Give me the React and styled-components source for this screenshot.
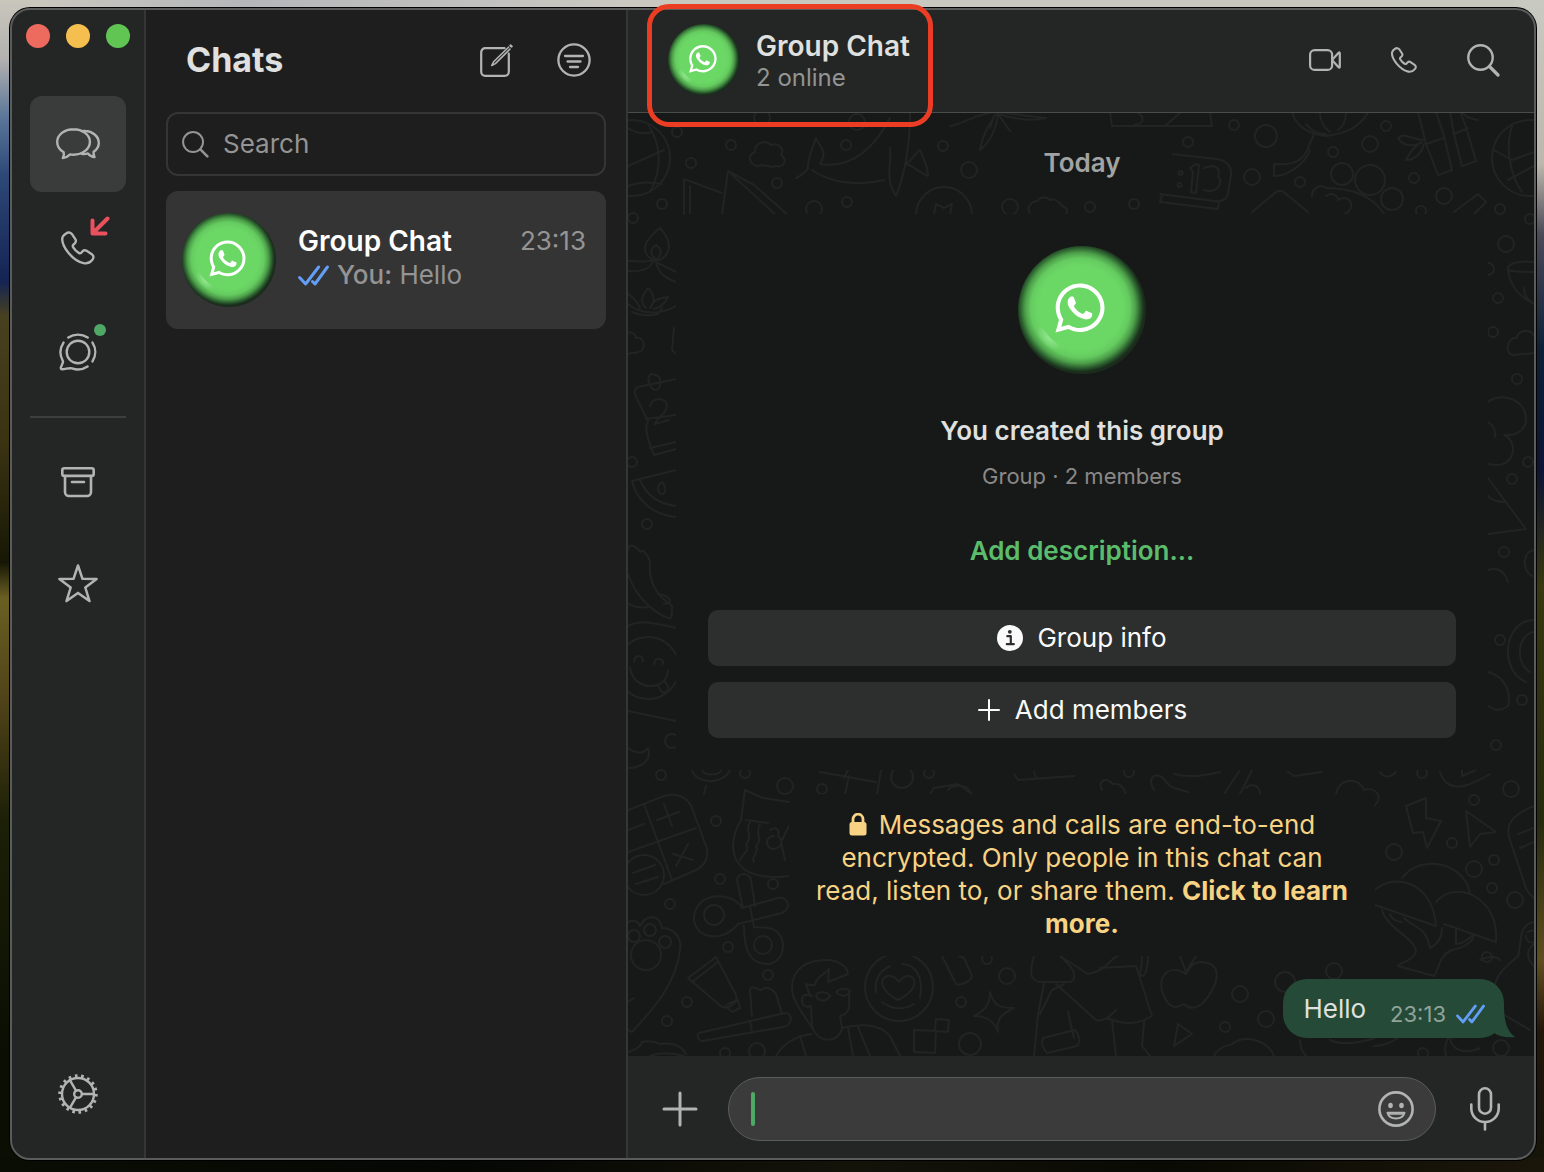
import React, { useId } from "react";
import styled, { createGlobalStyle, css } from "styled-components";
import { FaWhatsapp } from "react-icons/fa";

const color = {
  chrome: "#242625",
  list: "#1e1e1e",
  canvas: "#171918",
  doodle: "#222423",
  line: "#343635",
  edge: "#5a5c5b",
  icon: "#b2b4b3",
  text: "#dfe0df",
  muted: "#939493",
  green: "#5bbd6b",
  tick: "#629ef5",
  amber: "#f8d384",
};

const GlobalStyle = createGlobalStyle`
  *, *::before, *::after { box-sizing: border-box; }
  body {
    margin: 0;
    font-family: Inter, "Liberation Sans", sans-serif;
    font-size: 26px;
    line-height: 32px;
    color: ${color.text};
    background: #0b0d05;
  }
  button, input { font: inherit; color: inherit; }
  h1, h2, h3, p { margin: 0; }
`;

/* ---------- window frame ---------- */

const Desktop = styled.div`
  display: flex;
  min-height: 100vh;
  padding: 8px 8px 12px 10px;
  background:
    linear-gradient(90deg, #0a0d04, #050703 30%, #14130a 55%, #090a04 75%, #1b160a) bottom / 100% 14px no-repeat,
    linear-gradient(180deg, #c9c6bc 0, #b3b2b0 5%, #5b7699 10%, #2d4877 15%, #142453 24%, #48411f 27%, #3a3312 38%, #161705 48%, #6a5f22 51%, #4f4219 60%, #1c2007 70%, #0a0e03 90%) left / 30px 100% no-repeat,
    linear-gradient(180deg, #c8cac2 0, #bdb7ab 14%, #4a4a58 20%, #0d1f35 30%, #0c1433 40%, #38370f 50%, #262b0e 70%, #5f4d20 82%, #23160a 88%, #14150a 100%) right / 30px 100% no-repeat,
    linear-gradient(90deg, #cdc9bf, #b4b7ba 16%, #c9c7c0 40%, #c6c7bf) top / 100% 30px no-repeat;
`;

const Window = styled.div`
  display: flex;
  flex: 1;
  min-width: 0;
  border: 2px solid ${color.edge};
  border-radius: 20px;
  background: ${color.chrome};
  box-shadow: 0 0 0 1px #000;
`;

const Sidebar = styled.aside`
  display: flex;
  flex-direction: column;
  align-items: center;
  flex: 0 0 134px;
  padding: 14px 0 16px;
  border-right: 2px solid ${color.line};
`;

const Lights = styled.div`
  display: flex;
  gap: 16px;
  margin-bottom: 48px;
`;

const Light = styled.button`
  width: 24px;
  height: 24px;
  padding: 0;
  border: 0;
  border-radius: 50%;
  background: ${(p) => p.$tone};
`;

const Nav = styled.nav`
  display: flex;
  flex-direction: column;
  flex: 1;
  gap: 8px;
`;

const NavButton = styled.button`
  position: relative;
  display: grid;
  place-items: center;
  width: 96px;
  height: 96px;
  padding: 0;
  border: 0;
  border-radius: 12px;
  color: ${color.icon};
  background: ${(p) => (p.$active ? "#3a3c3b" : "transparent")};
`;

const NavRule = styled.hr`
  width: 96px;
  height: 2px;
  margin: 8px 0;
  border: 0;
  background: #3d3f3e;
`;

const NavSpacer = styled.div`
  flex: 1;
`;

const Badge = styled.span`
  position: absolute;
  display: block;
  line-height: 0;
  ${(p) =>
    p.$dot
      ? css`
          top: 20px;
          right: 20px;
          width: 12px;
          height: 12px;
          border-radius: 50%;
          background: #4fa866;
        `
      : css`
          top: 16px;
          right: 16px;
          color: #e9515f;
        `}
`;

/* ---------- shared parts ---------- */

const IconButton = styled.button`
  display: grid;
  place-items: center;
  padding: 0;
  border: 0;
  background: none;
  color: ${color.icon};
`;

const AvatarBox = styled.span`
  display: block;
  flex: none;
  width: ${(p) => p.$size}px;
  height: ${(p) => p.$size}px;
  svg { display: block; }
`;

/* ---------- chat list ---------- */

const ListColumn = styled.section`
  display: flex;
  flex-direction: column;
  flex: 0 0 482px;
  min-width: 0;
  padding: 0 20px;
  border-right: 2px solid ${color.line};
  background: ${color.list};
`;

const ListHeader = styled.header`
  display: flex;
  align-items: center;
  justify-content: space-between;
  height: 100px;
  margin-bottom: 2px;
  padding: 0 15px 0 20px;
`;

const ListTitle = styled.h1`
  font-size: 34px;
  line-height: 40px;
  font-weight: 700;
`;

const ListActions = styled.div`
  display: flex;
  gap: 44px;
`;

const SearchField = styled.label`
  display: flex;
  align-items: center;
  gap: 14px;
  height: 64px;
  padding: 0 14px;
  border: 2px solid #353535;
  border-radius: 12px;
  color: ${color.muted};
`;

const SearchInput = styled.input`
  flex: 1;
  min-width: 0;
  padding: 0;
  border: 0;
  outline: 0;
  background: none;
  color: ${color.text};
  &::placeholder { color: ${color.muted}; opacity: 1; }
`;

const ChatCard = styled.button`
  display: flex;
  align-items: flex-start;
  gap: 22px;
  margin-top: 15px;
  padding: 22px 20px 22px 16px;
  border: 0;
  border-radius: 12px;
  background: #343434;
  text-align: left;
`;

const ChatText = styled.span`
  display: flex;
  flex-direction: column;
  flex: 1;
  gap: 2px;
  padding-top: 12px;
`;

const ChatLine = styled.span`
  display: flex;
  align-items: center;
  gap: 8px;
  color: #949494;
`;

const ChatName = styled.span`
  flex: 1;
  font-size: 28px;
  font-weight: 600;
  color: #fff;
`;

const Sender = styled.span`
  font-weight: 500;
`;

/* ---------- conversation ---------- */

const Main = styled.main`
  display: flex;
  flex-direction: column;
  flex: 1;
  min-width: 0;
`;

const MainHeader = styled.header`
  display: flex;
  align-items: center;
  justify-content: space-between;
  padding: 14px 34px 16px 40px;
  border-bottom: 1px solid #4a4c4b;
`;

const Contact = styled.button`
  position: relative;
  display: flex;
  align-items: center;
  gap: 16px;
  padding: 0;
  border: 0;
  background: none;
  text-align: left;
`;

const Highlight = styled.span`
  position: absolute;
  z-index: 2;
  inset: -20px -23px -31px -21px;
  border: 5px solid #eb3d24;
  border-radius: 22px;
  pointer-events: none;
`;

const ContactText = styled.span`
  display: flex;
  flex-direction: column;
  padding-top: 4px;
`;

const ContactName = styled.span`
  font-size: 28px;
  font-weight: 600;
`;

const ContactStatus = styled.span`
  font-size: 24px;
  color: ${color.muted};
`;

const HeaderActions = styled.div`
  display: flex;
  align-items: center;
  gap: 50px;
`;

const Canvas = styled.div`
  position: relative;
  display: flex;
  flex-direction: column;
  align-items: center;
  flex: 1;
  padding: 19px 30px 18px 32px;
  background: ${color.canvas};
`;

const Wallpaper = styled.svg`
  position: absolute;
  inset: 0;
  width: 100%;
  height: 100%;
`;

const Plate = styled.div`
  position: relative;
  border-radius: 16px;
  background: ${color.canvas};
  text-align: center;
`;

const DayPlate = styled(Plate)`
  width: 180px;
  padding: 15px 0 13px;
  font-weight: 600;
  color: #a2a4a3;
`;

const GroupPlate = styled(Plate)`
  display: flex;
  flex-direction: column;
  align-items: center;
  align-self: stretch;
  margin: 22px 16px 0;
  padding: 32px;
`;

const GroupTitle = styled.h2`
  margin-top: 41px;
  font-size: 26px;
  font-weight: 600;
`;

const GroupMeta = styled.p`
  margin-top: 15px;
  font-size: 22px;
  line-height: 28px;
  color: #8b8888;
`;

const DescriptionLink = styled.a`
  margin: 45px 0 43px;
  font-weight: 600;
  color: ${color.green};
  text-decoration: none;
`;

const GroupActions = styled.div`
  display: flex;
  flex-direction: column;
  align-self: stretch;
  gap: 16px;
`;

const GroupAction = styled.button`
  display: flex;
  align-items: center;
  justify-content: center;
  gap: 14px;
  height: 56px;
  padding: 0;
  border: 0;
  border-radius: 10px;
  background: #2d2f2e;
  color: #fafafa;
`;

const NoticePlate = styled(Plate)`
  width: 586px;
  margin-top: 24px;
  padding: 14px 20px 16px;
  line-height: 33px;
  color: ${color.amber};
  svg { margin-right: 12px; vertical-align: -2px; }
  a { font-weight: 700; color: inherit; text-decoration: none; }
`;

const Bubble = styled.div`
  position: relative;
  display: flex;
  align-items: center;
  align-self: flex-end;
  height: 59px;
  margin-top: auto;
  padding: 0 19px 0 20px;
  border-radius: 24px;
  background: #264a38;
`;

const BubbleTail = styled.svg`
  position: absolute;
  right: -11px;
  bottom: 0;
`;

const BubbleMeta = styled.span`
  display: flex;
  align-items: center;
  gap: 10px;
  padding: 10px 0 0 24px;
  font-size: 22px;
  line-height: 28px;
  color: #8fa398;
`;

const Composer = styled.form`
  display: flex;
  align-items: center;
  padding: 21px 34px 17px;
`;

const MessageField = styled.div`
  display: flex;
  align-items: center;
  flex: 1;
  height: 64px;
  margin: 0 34px 0 30px;
  padding: 0 21px 0 22px;
  border: 1px solid #5b5d5c;
  border-radius: 32px;
  background: #3a3b3a;
`;

const Caret = styled.span`
  width: 4px;
  height: 34px;
  border-radius: 2px;
  background: #4fa866;
`;

const MessageInput = styled.input`
  flex: 1;
  min-width: 0;
  padding: 0 8px;
  border: 0;
  outline: 0;
  background: none;
`;

/* ---------- icons ---------- */

const Icon = ({ w, h, sw = 2.4, children }) => (
  <svg
    width={w}
    height={h}
    viewBox={`0 0 ${w} ${h}`}
    fill="none"
    stroke="currentColor"
    strokeWidth={sw}
    strokeLinecap="round"
    strokeLinejoin="round"
    aria-hidden="true"
  >
    {children}
  </svg>
);

const ChatsIcon = () => (
  <Icon w={44} h={32} sw={2.4}>
    <path d="M17.5 1.2C8.4 1.2 1.2 6.8 1.2 14c0 4.2 2.5 8 6.5 10.3.7 2-.2 4.2-.9 5.8 2.9-.3 5.6-1.9 7.4-3.7 1.1.2 2.2.3 3.3.3 9.1 0 16.4-5.8 16.4-12.8S26.6 1.2 17.5 1.2z" />
    <path d="M26 3.1c1-.2 2-.3 3-.2 7.4.3 13.8 5.2 13.8 12 0 3.6-1.8 6.5-5.2 8.8-.2 2 .2 4 .9 5.4-2.9-.3-5-1.8-6.6-3.7-1.9.6-4 .8-6.2.4" />
  </Icon>
);

const PhoneShape = () => (
  <path d="M5 2.6C7 .9 9.5 1.2 11 3.2l3.3 5c1 1.6.7 3-.5 4.2l-1.4 1.3c-.8.8-.8 1.6-.2 2.6 1.3 2.1 3.4 4.3 5.6 5.6 1 .6 1.8.5 2.6-.3l1.2-1.4c1.2-1.2 2.6-1.3 4-.4l5.2 3.5c2 1.4 2.2 3.7.4 5.7-2.2 2.6-4.9 4-8.6 3.2C17 31 11.5 26.8 7.4 21.8 3.6 17 1.2 12 1.2 8.2c0-2.2 1.5-4.1 3.8-5.6z" />
);

const CallsIcon = () => (
  <Icon w={34} h={34} sw={2.4}>
    <PhoneShape />
  </Icon>
);

const CallIcon = () => (
  <svg width="26" height="26" viewBox="0 0 34 34" fill="none" stroke="currentColor" strokeWidth="2.7" strokeLinejoin="round" aria-hidden="true">
    <PhoneShape />
  </svg>
);

const MissedIcon = () => (
  <Icon w={20} h={20} sw={4}>
    <path d="M17.5 2.5L3 17M2.5 4.5v13h13" />
  </Icon>
);

const StatusIcon = () => (
  <Icon w={40} h={40} sw={2.4}>
    <circle cx="20" cy="20" r="11.3" />
    <path d="M10.3 5.6a17.5 17.5 0 0 1 19.4 0M34.5 10.6a17.5 17.5 0 0 1 0 18.8M29.6 34.5A17.5 17.5 0 0 1 14 36.4c-2.5-.8-6 .6-9.8.8-1.2 0-1.6-.6-1.3-1.8l2-4.9c.3-1 0-1.6-.3-2.1A17.5 17.5 0 0 1 5.5 10.6" />
  </Icon>
);

const ArchiveIcon = () => (
  <Icon w={34} h={31} sw={2.6}>
    <rect x="1.3" y="1.3" width="31.4" height="7.6" rx="2" />
    <path d="M4 9v16a4 4 0 0 0 4 4h18a4 4 0 0 0 4-4V9M11 15h12" />
  </Icon>
);

const StarIcon = () => (
  <Icon w={40} h={44} sw={2.5}>
    <path d="M20 1.5l4.5 13.3 14.1.2-11.3 8.5 4.2 13.6L20 28.9 8.5 37.1l4.2-13.6L1.4 15l14.1-.2z" />
  </Icon>
);

const GearIcon = () => (
  <Icon w={40} h={40} sw={2.4}>
    <circle cx="20" cy="20" r="16" />
    <circle cx="20" cy="20" r="18.2" strokeWidth="3" strokeLinecap="butt" pathLength="100" strokeDasharray="2.3 3.256" />
    <circle cx="20" cy="20" r="3.8" />
    <path d="M24 20h12M18 16.6L11.9 6.2M18 23.4l-6.1 10.4" />
  </Icon>
);

const ComposeIcon = () => (
  <Icon w={33} h={33} sw={2.2}>
    <path d="M24.5 4.2H5.2a4 4 0 0 0-4 4v19.6a4 4 0 0 0 4 4h19.6a4 4 0 0 0 4-4V9.5" />
    <path d="M28.5 3.2L13.6 17.8l-1.9 3.7 3.7-1.9L30 5" strokeWidth="1.6" />
    <path d="M30.6 1.6l.8.8" strokeWidth="2.6" />
  </Icon>
);

const FilterIcon = () => (
  <Icon w={34} h={34} sw={2.3}>
    <circle cx="17" cy="17" r="15.6" />
    <path d="M8 13h18M10.5 18.5h13M13 24h8" />
  </Icon>
);

const SearchIcon = ({ size }) => (
  <svg width={size} height={size} viewBox="0 0 33 33" fill="none" stroke="currentColor" strokeLinecap="round" aria-hidden="true">
    <circle cx="13.5" cy="13.5" r="12.2" strokeWidth="2.4" />
    <path d="M22.5 22.5l8.5 8.5" strokeWidth="3.2" />
  </svg>
);

const VideoIcon = () => (
  <Icon w={32} h={22} sw={2.2}>
    <rect x="1.1" y="1.1" width="22" height="19.8" rx="4.5" />
    <path d="M23 11l6.6-7.2c.7-.7 1.2-.4 1.2.4v13.6c0 .8-.5 1.1-1.2.4z" />
  </Icon>
);

const Ticks = ({ w, h }) => (
  <svg width={w} height={h} viewBox="0 0 31 21" fill="none" stroke={color.tick} strokeWidth="3" strokeLinecap="round" strokeLinejoin="round" role="img" aria-label="Read">
    <path d="M1.6 12.5l6 6.5L20.6 2M14.5 16.5L17 19 29.4 2" />
  </svg>
);

const InfoIcon = () => (
  <svg width="26" height="26" viewBox="0 0 26 26" aria-hidden="true">
    <circle cx="13" cy="13" r="13" fill="#fafafa" />
    <circle cx="12.8" cy="6.8" r="1.9" fill="#2d2f2e" />
    <path d="M10.3 11.2h3.5v7.6M9.8 19.2h7" fill="none" stroke="#2d2f2e" strokeWidth="2.2" strokeLinecap="round" strokeLinejoin="round" />
  </svg>
);

const PlusIcon = ({ size, sw }) => (
  <Icon w={size} h={size} sw={sw}>
    <path d={`M${size / 2} 2v${size - 4}M2 ${size / 2}h${size - 4}`} />
  </Icon>
);

const LockIcon = () => (
  <svg width="18" height="23" viewBox="0 0 18 23" aria-hidden="true">
    <rect x="0.5" y="9" width="17" height="13.5" rx="2.5" fill={color.amber} />
    <path d="M4 11V6.2a5 5 0 0 1 10 0V11" fill="none" stroke={color.amber} strokeWidth="2.8" />
  </svg>
);

const EmojiIcon = () => (
  <Icon w={36} h={36} sw={2.6}>
    <circle cx="18" cy="18" r="16.6" />
    <ellipse cx="12.5" cy="14.5" rx="2.3" ry="2.8" fill="currentColor" stroke="none" />
    <ellipse cx="23.5" cy="14.5" rx="2.3" ry="2.8" fill="currentColor" stroke="none" />
    <path d="M9.500 21.800h17c-1 3.600-4.300 5.700-8.500 5.700s-7.500-2.100-8.500-5.700z" strokeWidth="2" />
    <path d="M11 23h14" strokeWidth="1.6" />
  </Icon>
);

const MicIcon = () => (
  <Icon w={30} h={44} sw={2.6}>
    <rect x="9" y="1.3" width="12" height="25.4" rx="6" />
    <path d="M1.3 17.5v4A13.5 13.5 0 0 0 15 35a13.5 13.5 0 0 0 13.7-13.5v-4M15 35v7.5" />
  </Icon>
);

const Avatar = ({ size }) => {
  const id = useId();
  return (
    <AvatarBox $size={size}>
      <svg width={size} height={size} viewBox="0 0 128 128" role="img" aria-label="Group picture">
        <defs>
          <radialGradient id={`${id}g`} cx="0.487" cy="0.484" r="0.502">
            <stop offset="0.66" stopColor="#6bd765" />
            <stop offset="0.77" stopColor="#65cc60" />
            <stop offset="0.86" stopColor="#4d9f4a" />
            <stop offset="0.93" stopColor="#2d6230" />
            <stop offset="0.98" stopColor="#1c371e" />
            <stop offset="1" stopColor="#1b2c1c" />
          </radialGradient>
          <radialGradient id={`${id}h`}>
            <stop offset="0" stopColor="#93e58f" />
            <stop offset="1" stopColor="#93e58f" stopOpacity="0" />
          </radialGradient>
        </defs>
        <circle cx="64" cy="64" r="64" fill={`url(#${id}g)`} />
        <ellipse cx="31" cy="92" rx="16" ry="8" transform="rotate(45 31 92)" fill={`url(#${id}h)`} />
        <circle cx="62" cy="62" r="42" fill="#6bd765" />
        <FaWhatsapp x="34" y="34" size={56} color="#fff" />
      </svg>
    </AvatarBox>
  );
};

/* ---------- wallpaper ---------- */

const DOTS = [
  [677, 132], [731, 145], [691, 163], [846, 145], [943, 146], [777, 183], [662, 204], [847, 202], [633, 218],
  [1234, 125], [1188, 142], [1300, 182], [1333, 152], [1386, 126], [1414, 178], [1421, 211], [1500, 209],
  [1530, 219], [1090, 207], [1134, 204], [1498, 298], [1493, 332], [1517, 379], [1512, 479], [1528, 462],
  [1504, 552], [647, 524], [632, 462], [661, 775], [745, 773], [822, 789], [929, 773], [716, 821], [720, 879],
  [773, 884], [670, 904], [728, 947], [768, 975], [687, 1002], [667, 1021], [725, 1053], [987, 959], [961, 1002],
  [1422, 773], [1474, 800], [1452, 843], [1494, 860], [1492, 888], [1487, 957], [1225, 1027], [1423, 1053],
  [1129, 772], [1500, 640], [1522, 700], [1496, 745],
];

const RINGS = [
  [762, 118, 8], [857, 122, 8], [814, 209, 8], [969, 170, 8], [1266, 136, 11], [1252, 177, 8], [1370, 144, 8],
  [1342, 174, 11], [1370, 180, 15], [1392, 199, 11], [1444, 196, 8], [1010, 207, 8], [1506, 244, 8], [1488, 269, 6],
  [648, 668, 31], [672, 741, 7], [785, 786, 8], [902, 777, 11], [757, 1051, 8], [1007, 976, 8], [970, 1044, 11],
  [1511, 789, 8], [1394, 852, 8], [1474, 869, 8], [1515, 900, 8], [1334, 971, 8], [1240, 994, 8], [1285, 982, 10],
  [1266, 1019, 8], [1501, 1048, 8], [899, 987, 34], [714, 915, 10], [763, 945, 9], [646, 955, 15], [650, 930, 6],
  [665, 942, 6], [634, 936, 6], [632, 158, 38], [1530, 158, 38], [944, 215, 28], [644, 875, 20],
];

const SHAPES = [
  // beach balls
  "M628 128q12 8 24 4M628 186q14-6 34-2M648 124c14 22 14 46 2 68M628 166l36-16M1512 126c-6 18-4 46 10 66M1494 150l18 10 22-8M1508 180l26-14",
  // cloud
  "M757 166c-8-2-10-11-2-14-1-9 11-13 16-7 8-3 14 5 10 10 7 5 3 13-6 11-5 3-9-3-18 0z",
  // whale
  "M796 178c6-2 8-6 12-9-1-9 4-20 8-31 4 10 12 12 4 26 26 4 50-8 70-46M812 170c20 14 50 16 72 10M890 148c2 18-6 30 6 48 8-20 14-50 14-84M906 164c8-6 12-14 14-14 4 10 8 16 8 26-10-4-14-10-22-12",
  // playing cards
  "M684 214v-35l38 14M690 214v-28M722 214l6-43 26 14 34 30M728 171l48 44",
  // palm leaves
  "M950 126c14-2 24-12 46-14 18 2 32 4 50 6-18 4-34 0-48-4 8 12 14 18 18 28M980 150c2-14 8-24 16-36M980 150c10-8 16-20 18-36M990 128l4-12",
  // framed landscape
  "M1110 112l2 14h100l-2-14M1134 125c12-2 10-8 4-12M1166 125l14-12",
  // sparkler and lantern
  "M1292 112c4 14 16 22 34 24 18-2 34-8 42-24M1306 124c6 8 14 10 20 10M1320 112c0 8 2 14 10 20M1346 112c0 8-2 14-8 18M1314 134l-6 14c-4 12-14 18-34 16v12c16 0 32-14 36-26",
  // digital clock
  "M1172 154l44 5c10 1 16 7 15 16l-3 18c-1 7-8 9-14 8l-54-7M1162 195l-2 7 58 7 1-7",
  "M1190 168l6-4 3 1-3 28-5-1 2-20zM1204 168c10-4 18 0 14 8 6 6 0 18-14 14M1180 171a2 2 0 1 0 1 0M1179 183a2 2 0 1 0 1 0",
  // bamboo
  "M1418 112l8 32 12 31 14-5-8-34-8-24M1426 144l18-6M1450 112l4 22 8 32 14-5-10-34-6-16M1454 134l14-6M1424 140c-12 0-18-8-26-2 6 10 18 8 24 4-8 4-12 10-16 18 10 0 16-8 18-16M1462 112c4 6 8 6 16 8",
  // arrow, heart and hand
  "M1252 212l24-20c4-2 6-2 10 2l22 18M1312 196c0-8 8-12 14-8 20 0 44 4 58 26M1326 196c8-6 14 4 12 4 10-6 18 4 10 12l-14 8M1454 212l24-18 8 8-12 12",
  // bush
  "M1030 213c-4-6 2-12 8-12 2-5 10-4 12-1 8-2 10 4 12 6 6 2 6 6 4 8M934 214l2-10 8 4 8-4-2 10",
  // oil lamp
  "M660 228c-10 8-15 14-15 20 0 8 6 12 12 12s12-6 12-14c0-7-4-12-9-18zM655 258c-6-4-4-10 1-13 6 4 6 10 1 14M628 261c10 0 16 2 26-1-4 10-14 12-26 11M656 260c0 10 8 18 20 22M676 272l-20-10M628 304c14 12 34 10 48 2M632 312c8 4 20 4 26 2l4-6M646 308c-8-8-2-14 2-20 8 8 6 16 2 20M650 308c4-10 12-10 18-11-4 8-8 10-14 12M640 308c-4-8-8-12-12-14",
  // small cloud and cup
  "M628 332c6 0 8 4 8 6 10-2 10 14 2 14-4 2-6 0-10 2M674 328l-2 22 4 4",
  // calendar page
  "M676 379l-38 8c-4 2-4 6-2 10l12 24M648 421c-4 8 0 16 2 24l4 10 22-6M646 419l30-4M651 374c-6 4 0 16 5 16s6-14 0-15zM650 406c2-10 18-8 17 0-1 8-10 12-12 18l14-4M650 448l26-6",
  // watermelon
  "M676 470l-44 11c4 18 20 34 44 36M640 480c6 14 18 24 36 26M662 482c-6 4-4 12 0 12s4-8 0-12",
  // pepper
  "M628 550c0-8 8-4 12 2 4-4 8 4 10 10-2 22 8 34 22 44 0 8 0 14-4 12-20-8-34-26-40-44M628 604c8 4 14 4 20 3M658 594c6 0 12 4 12 8l-6 2M628 626c8-6 24-4 48 2",
  // tongue face
  "M634 662c1-8 9-8 9 0M654 664c1-7 9-7 9 0M630 668c2 14 16 22 30 16 6-4 8-8 8-14M658 686l4 6c4 2 8-2 6-6l-4-6M628 711l48 10",
  // moon
  "M628 748c8 6 16 6 20 0 4 12-6 20-20 20M692 770c4 14 30 16 38 0M702 770c2 6 16 6 20 0M706 786l-2 8M844 778l4-8M820 772l56 10M877 794l4-24M845 794l4-18M930 794l4-6 24-4 14 10",
  // coffee bowl
  "M1534 262c-16-2-28 2-26 8 6 2 16 2 26 2M1508 270c2 18 14 28 26 34M1524 288c0 8 4 12 10 16",
  // cloud and flower on the right strip
  "M1534 336c-4-8-16-6-17 2-10-2-14 18-2 17 8-2 10 0 19-2M1488 402c12-10 38-4 38 18 0 10-10 16-22 15 14 6 12 30-8 30l-8-1M1488 422c6 4 8 10 7 15",
  // set square
  "M1488 478l38 51-38 5M1488 496c4 4 8 6 16 6",
  // lower right strip
  "M1488 570c14-4 18 6 20 12M1534 550c-12 2-12 20-2 26M1534 620c-30 0-36 50-8 62M1534 632c-16 2-20 30-4 40M1488 672c16 4 24 20 20 34-8 6-14 4-20 0",
  // calculator
  "M628 810l36-14c14-4 24 2 28 12l14 38c4 12-2 20-10 24l-32 14M644 804l28 76M628 852l68-24M657 820l22-8M664 804l8 22M673 854l20 6M688 844l-12 22M628 830l16-6M633 873l22-8M636 884l22-7",
  // cat
  "M789 802l-26-4-18-8-4 30c-12 20-10 40 4 50 14 8 30 8 44 6M746 820l22 3M750 822c-6 10 4 14-4 22 4 8-4 10-6 16M760 824c-6 10 4 14-4 22 4 8-6 10-2 16M789 826l-8 16 4 18M770 830c6-4 10 0 8 6 8 6 0 16-8 12-6-6-2-12 4-12",
  // crossed spoons
  "M742 908l36-10c10-2 14 10 4 15l-44 11M742 908c-8-16-44-18-48 8-2 20 26 30 44 8M737 880c0-8 12-8 14 0l4 26M744 926c0 28 8 38 24 38 20-2 20-34 0-36l-14-1-4-20M737 880l6 28",
  // paw and heart
  "M628 922c4-2 10-2 12 4 6-12 20-12 22 2 12 0 20 10 18 22-4 34-26 58-48 82l-4-2",
  // paint tube
  "M688 978l28-21 20 38c2 8-6 14-14 12zM692 982l26-20M728 1004l10-4 2 8-8 4-6-6",
  // toothbrush
  "M699 1033l86-20c8 0 8 12-2 14l-80 14c-6 0-6-6-4-8zM750 1022l2 8M752 1016l-2-26c2-6 6 0 12 0 2-4 10-2 14 4l6 20",
  // person reading
  "M812 1028c-8-14-20-26-20-40 0-20 16-28 34-28 14 0 22 8 22 14l-20 8 1-13c-4 6-12 6-14 16-4 0-8 0-9-1l4 12M812 996c-4-2-10-2-10 4 0 6 4 8 9 6l1 20c6 20 28 16 30 2l-2-12c10-2 10-10 9-22M816 996c2-6 12-4 14 0-2 4-10 8-14 0zM836 992c4-4 12-4 14-1-2 6-10 6-14 1zM776 1056c8-14 20-20 36-22M842 1028c24-6 44-2 50 12l8 16M800 1036l6 20M848 1028l5 28M858 1027l12 29",
  // heart dish
  "M898 1000c-30-16-10-34 1-18 12-16 28 4-1 18zM876 992c-2-14 6-22 14-26M902 964c14 0 22 14 18 34M882 1002c10 8 22 8 32 2",
  // tag, sparkle and squares
  "M944 960c-4-4 0-8 6-8l14 6 8 18c0 4-10 10-16 8zM990 992c4 14 10 16 24 16-12 6-18 10-16 24-4-12-12-16-24-16 12-6 16-12 16-24zM914 1030l22 1-1 22-21-1zM936 1019l13 1-1 12-13-1z",
  // standing figure
  "M1034 956c-6 20-2 26 8 26h26c10 0 6-12 2-16l-10-10M1044 984l-6 30-4 42M1056 984l40 36c8 2 14-4 20-10M1068 1012l6 26M1043 1038l32-8c4 4 6 12 2 16l-30 7c-4-4-6-10-4-15zM1040 1014l12-24 12-6M1060 956l28 18c20-4 20-14 30-18M1136 966l16 50c-16 10-30 8-46 2M1112 1020l4 36M1144 1022l-2 24 8 10M1142 956c0 14-4 20 0 20s6-10 6-20M1100 968l36-2",
  // apple
  "M1186 974c-20-12-30 6-22 22 6 14 14 12 20 8 6 6 12 4 18 0 18-20 22-42-2-42-6 0-10 4-14 12zM1180 956l6 16 10-16",
  // plane and petals along the bottom
  "M1178 1024l14 10-18 12zM1214 1056c6-12 16-10 18-12 12-10 36-4 42 12M1306 1056c-6-6-6-12-6-16M1330 1040c12 6 34 2 44-2M1374 1046c8 0 18-4 24-8M1446 1056c-2-10 0-16 4-20 0 12 12 20 30 12",
  // lightning and paper plane
  "M1406 806l20-8v20l15 3-14 27-4-16-10 1zM1466 811l30 21-16 2-10 13z",
  // mushrooms
  "M1375 890c20-18 58-8 61 36l-61-21M1402 878c20-26 64-14 68 16M1436 902c20-24 64-4 60 40l-52-18M1382 910c6 20 34 28 34 42-4 10-16 10-18 14l36 10c6-8 4-20 18-26 12-2 20-8 22-14M1390 914c2 6 8 8 12 8M1404 918c10 10 22 8 26 30 8-4 12-10 12-20M1456 930v14c8 0 14-6 18-10",
  // leaf at the right edge
  "M1534 806c-20 8-30 18-24 34l14 42c2 10 8 14 10 16M1518 834l16-6M1520 848l14-6M1534 922c-16 2-12 20-16 34-10 10-22 16-24 34l2 20 34 20M1526 936a6 6 0 1 0 2-4M1534 944c-8 6-8 14 0 22",
  // strokes between the two plates
  "M1014 774l4 6 56-4M1034 772l2 6M1102 790c-6-12 8-12 10-6 10-2 12 6 14 10M1154 790c-6-10-2-16 6-14 8 4 4 8 14 12l14 4M1174 774c14 4 30 2 46-2M1240 794l12-24M1224 794l16-24M1246 788c6-6 14-2 14 6M1288 772l6 4 28-4M1336 794c4-18 24-16 28-4 12-4 20 8 10 16M1440 772c6 18 20 20 50 2M1462 770v6l14-6M948 790c4-6 20-6 22 2",
  "M634 998l-6 4M628 1052c6-2 12-4 14-10 8-2 14 0 18 2 14-2 22 2 26 10M650 1056c10-4 20-4 34 0M1380 772c4 6 10 6 16 0M1500 960c-4-4-12-4-20 0",
];

const Doodles = () => (
  <Wallpaper viewBox="628 113 906 943" preserveAspectRatio="xMinYMin slice" aria-hidden="true">
    <g fill="none" stroke={color.doodle} strokeWidth="2" strokeLinecap="round" strokeLinejoin="round">
      {DOTS.map(([x, y]) => (
        <circle key={`${x}-${y}`} cx={x} cy={y} r="5" />
      ))}
      {RINGS.map(([x, y, r]) => (
        <circle key={`${x}-${y}`} cx={x} cy={y} r={r} />
      ))}
      {SHAPES.map((d) => (
        <path key={d} d={d} />
      ))}
    </g>
  </Wallpaper>
);

/* ---------- page ---------- */

export default function App() {
  return (
    <Desktop>
      <GlobalStyle />
      <Window>
        <Sidebar>
          <Lights>
            <Light $tone="#ed6a5e" aria-label="Close" />
            <Light $tone="#f5bf4f" aria-label="Minimize" />
            <Light $tone="#61c554" aria-label="Zoom" />
          </Lights>
          <Nav>
            <NavButton $active aria-label="Chats"><ChatsIcon /></NavButton>
            <NavButton aria-label="Calls">
              <CallsIcon />
              <Badge><MissedIcon /></Badge>
            </NavButton>
            <NavButton aria-label="Status">
              <StatusIcon />
              <Badge $dot />
            </NavButton>
            <NavRule />
            <NavButton aria-label="Archived"><ArchiveIcon /></NavButton>
            <NavButton aria-label="Starred"><StarIcon /></NavButton>
            <NavSpacer />
            <NavButton aria-label="Settings"><GearIcon /></NavButton>
          </Nav>
        </Sidebar>

        <ListColumn>
          <ListHeader>
            <ListTitle>Chats</ListTitle>
            <ListActions>
              <IconButton aria-label="New chat"><ComposeIcon /></IconButton>
              <IconButton aria-label="Filter chats"><FilterIcon /></IconButton>
            </ListActions>
          </ListHeader>
          <SearchField>
            <SearchIcon size={27} />
            <SearchInput type="text" placeholder="Search" aria-label="Search" />
          </SearchField>
          <ChatCard>
            <Avatar size={94} />
            <ChatText>
              <ChatLine>
                <ChatName>Group Chat</ChatName>
                <span>23:13</span>
              </ChatLine>
              <ChatLine>
                <Ticks w={31} h={21} />
                <span><Sender>You:</Sender> Hello</span>
              </ChatLine>
            </ChatText>
          </ChatCard>
        </ListColumn>

        <Main>
          <MainHeader>
            <Contact>
              <Avatar size={72} />
              <ContactText>
                <ContactName>Group Chat</ContactName>
                <ContactStatus>2 online</ContactStatus>
              </ContactText>
              <Highlight />
            </Contact>
            <HeaderActions>
              <IconButton aria-label="Video call"><VideoIcon /></IconButton>
              <IconButton aria-label="Voice call"><CallIcon /></IconButton>
              <IconButton aria-label="Search in chat"><SearchIcon size={33} /></IconButton>
            </HeaderActions>
          </MainHeader>

          <Canvas>
            <Doodles />
            <DayPlate>Today</DayPlate>
            <GroupPlate>
              <Avatar size={128} />
              <GroupTitle>You created this group</GroupTitle>
              <GroupMeta>Group · 2 members</GroupMeta>
              <DescriptionLink href="#description">Add description...</DescriptionLink>
              <GroupActions>
                <GroupAction><InfoIcon />Group info</GroupAction>
                <GroupAction><PlusIcon size={24} sw={2} />Add members</GroupAction>
              </GroupActions>
            </GroupPlate>
            <NoticePlate>
              <LockIcon />Messages and calls are end-to-end<br />
              encrypted. Only people in this chat can<br />
              read, listen to, or share them. <a href="#encryption">Click to learn<br />more.</a>
            </NoticePlate>
            <Bubble>
              <span>Hello</span>
              <BubbleMeta>
                23:13
                <Ticks w={29} h={20} />
              </BubbleMeta>
              <BubbleTail width="24" height="34" viewBox="0 0 24 34" aria-hidden="true">
                <path d="M13 0c0 16 2 26 11 33-8 .6-15 0-21-4z" fill="#264a38" />
              </BubbleTail>
            </Bubble>
          </Canvas>

          <Composer>
            <IconButton type="button" aria-label="Attach"><PlusIcon size={36} sw={3} /></IconButton>
            <MessageField>
              <Caret />
              <MessageInput type="text" aria-label="Message" />
              <IconButton type="button" aria-label="Emoji"><EmojiIcon /></IconButton>
            </MessageField>
            <IconButton type="button" aria-label="Record voice message"><MicIcon /></IconButton>
          </Composer>
        </Main>
      </Window>
    </Desktop>
  );
}
